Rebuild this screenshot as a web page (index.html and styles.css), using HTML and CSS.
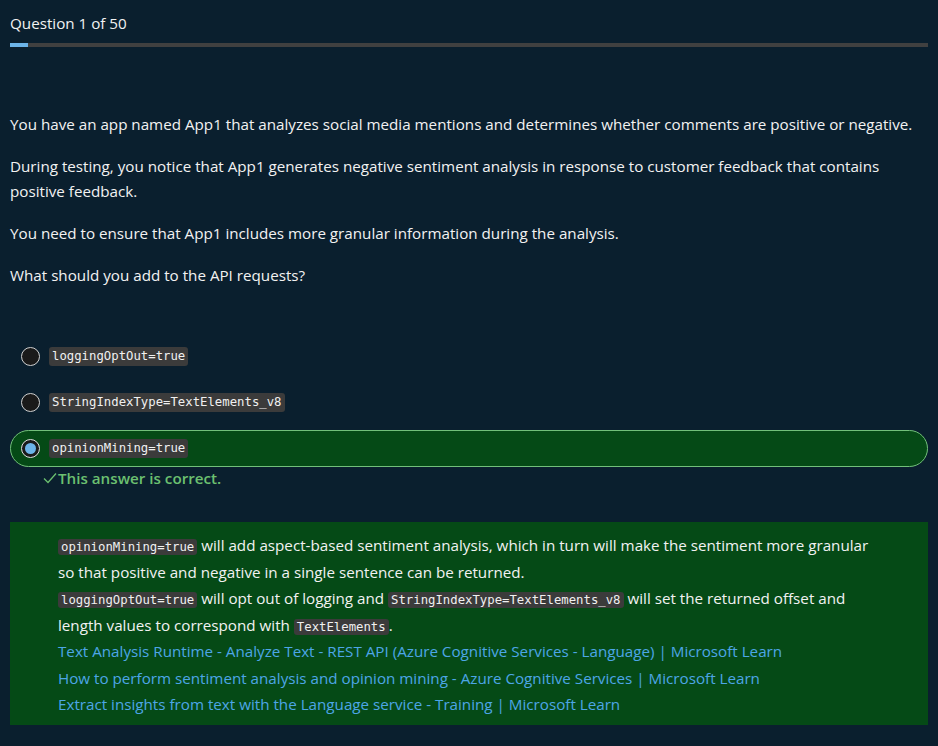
FILE: index.html
```html
<!DOCTYPE html>
<html>
<head>
<meta charset="utf-8">
<link rel="stylesheet" href="styles.css">
</head>
<body>
<div class="page">
  <header class="head">
    <div class="qnum">Question 1 of 50</div>
    <div class="track"><div class="fill" style="width:18px"></div></div>
  </header>

  <section class="question">
    <p>You have an app named App1 that analyzes social media mentions and determines whether comments are positive or negative.</p>
    <p>During testing, you notice that App1 generates negative sentiment analysis in response to customer feedback that contains positive feedback.</p>
    <p>You need to ensure that App1 includes more granular information during the analysis.</p>
    <p>What should you add to the API requests?</p>
  </section>

  <div class="options">
    <div class="opt"><span class="radio"></span><code>loggingOptOut=true</code></div>
    <div class="opt"><span class="radio"></span><code>StringIndexType=TextElements_v8</code></div>
    <div class="opt selected"><span class="radio on"></span><code>opinionMining=true</code></div>
  </div>
  <div class="verdict"><svg class="check" width="14" height="12" viewBox="0 0 14 12"><path d="M1 6.5 L5 10.5 L13 1.5" fill="none" stroke="currentColor" stroke-width="1.3"/></svg>This answer is correct.</div>

  <section class="explain">
    <div class="inner">
      <code>opinionMining=true</code> will add aspect-based sentiment analysis, which in turn will make the sentiment more granular so that positive and negative in a single sentence can be returned.<br>
      <code>loggingOptOut=true</code> will opt out of logging and <code>StringIndexType=TextElements_v8</code> will set the returned offset and length values to correspond with <code>TextElements</code>.<br>
      <a href="#">Text Analysis Runtime - Analyze Text - REST API (Azure Cognitive Services - Language) | Microsoft Learn</a><br>
      <a href="#">How to perform sentiment analysis and opinion mining - Azure Cognitive Services | Microsoft Learn</a><br>
      <a href="#">Extract insights from text with the Language service - Training | Microsoft Learn</a>
    </div>
  </section>
</div>
</body>
</html>
```

FILE: styles.css
```css
html, body {
  margin: 0;
  padding: 0;
  background: #0a1f2e;
  color: #f2f2f2;
  font-family: "Open Sans", "Noto Sans", sans-serif;
  font-size: 15.2px;
}
.page {
  padding: 0 10px;
}
.head {
  padding-top: 12px;
}
.qnum {
  line-height: 22px;
}
.track {
  margin-top: 9px;
  height: 4px;
  background: #404040;
}
.fill {
  height: 4px;
  background: #6cb4e8;
}
.question {
  padding-top: 65px;
}
.question p {
  margin: 0 0 17px 0;
  line-height: 25px;
}
code {
  font-family: "DejaVu Sans Mono", monospace;
  font-size: 12.3px;
  line-height: 1;
  background: #3b3b3b;
  color: #f0f0f0;
  border-radius: 3px;
  padding: 1px 3px;
}
.options {
  margin-top: 50px;
  display: flex;
  flex-direction: column;
  gap: 9px;
}
.opt {
  display: flex;
  align-items: center;
  gap: 9px;
  height: 37px;
  padding-left: 10px;
  border: 1px solid transparent;
  border-radius: 19px;
  box-sizing: border-box;
}
.opt code {
  padding: 3px 3px;
}
.opt.selected {
  background: #054a16;
  border-color: #72c07a;
}
.radio {
  width: 17px;
  height: 17px;
  border-radius: 50%;
  border: 1.5px solid #d0d0d0;
  background: #1a1a1a;
  box-sizing: content-box;
  position: relative;
}
.radio.on {
  border-color: #e0e0e0;
}
.radio.on::after {
  content: "";
  position: absolute;
  left: 3px;
  top: 3px;
  width: 11px;
  height: 11px;
  border-radius: 50%;
  background: #6cb4e8;
}
.verdict {
  margin-top: 0;
  padding-left: 33px;
  color: #6cc070;
  font-weight: 600;
  line-height: 22px;
  display: flex;
  align-items: center;
  gap: 1px;
}
.check {
  color: #6cc070;
}
.explain {
  margin-top: 33px;
  background: #054a16;
  padding: 10px 0 7px 48px;
}
.inner {
  line-height: 26.5px;
  max-width: 820px;
}
a {
  color: #4da6e6;
  text-decoration: none;
}
```
